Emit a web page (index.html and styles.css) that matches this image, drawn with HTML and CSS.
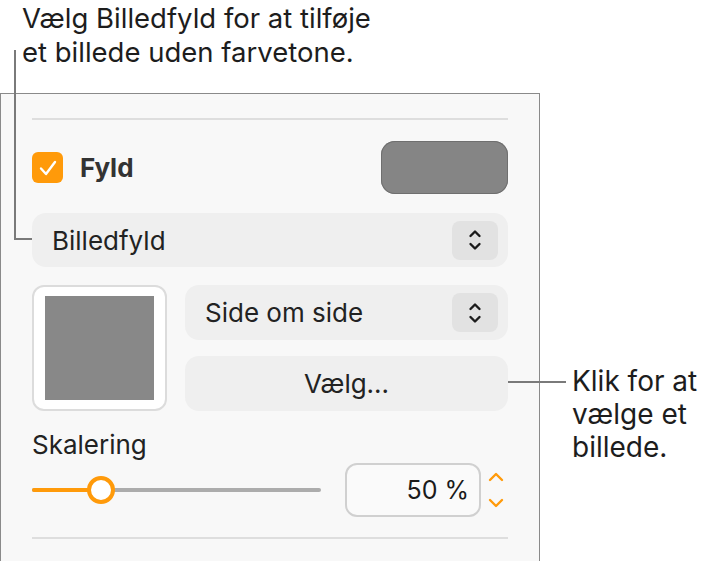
FILE: index.html
```html
<!DOCTYPE html>
<html lang="da">
<head>
    <meta charset="UTF-8">
    <title>Billedfyld</title>
    <link rel="stylesheet" href="styles.css">
</head>
<body>
<div class="page">
    <p class="caption">Vælg Billedfyld for at tilføje<br>et billede uden farvetone.</p>

    <div class="panel">
        <div class="rule"></div>

        <div class="fill-row">
            <label class="check">
                <span class="check-box">
                    <svg width="20" height="18" viewBox="0 0 20 18"><path d="M3 9.5 L8 15 L17 3" fill="none" stroke="#fff" stroke-width="2.4" stroke-linecap="round" stroke-linejoin="round"/></svg>
                </span>
                <span class="check-label">Fyld</span>
            </label>
            <div class="swatch"></div>
        </div>

        <div class="popup">
            <span>Billedfyld</span>
            <span class="stepper">
                <svg width="14" height="26" viewBox="0 0 14 26"><path d="M2.5 9 L7 4.5 L11.5 9 M2.5 17 L7 21.5 L11.5 17" fill="none" stroke="#1c1c1c" stroke-width="2.4" stroke-linecap="round" stroke-linejoin="round"/></svg>
            </span>
        </div>

        <div class="image-grid">
            <div class="well"><div class="well-img"></div></div>
            <div class="popup">
                <span>Side om side</span>
                <span class="stepper">
                    <svg width="14" height="26" viewBox="0 0 14 26"><path d="M2.5 9 L7 4.5 L11.5 9 M2.5 17 L7 21.5 L11.5 17" fill="none" stroke="#1c1c1c" stroke-width="2.4" stroke-linecap="round" stroke-linejoin="round"/></svg>
                </span>
            </div>
            <div class="button">Vælg...</div>
        </div>

        <div class="scale-label">Skalering</div>
        <div class="scale-row">
            <div class="slider">
                <div class="track"><div class="track-on" style="width: 68px"></div></div>
                <div class="thumb" style="left: 55px"></div>
            </div>
            <div class="number">50 %</div>
            <svg class="num-step" width="18" height="40" viewBox="0 0 18 40"><path d="M3 10 L9 4 L15 10 M3 30 L9 36 L15 30" fill="none" stroke="#ff9a0a" stroke-width="2.4" stroke-linecap="round" stroke-linejoin="round"/></svg>
        </div>

        <div class="rule bottom"></div>
    </div>

    <div class="lead lead-left"></div>
    <div class="lead lead-right"></div>
    <p class="callout">Klik for at<br>vælge et<br>billede.</p>
</div>
</body>
</html>
```

FILE: styles.css
```css
body {
    margin: 0;
    background: #fff;
    font-family: Inter, "Liberation Sans", sans-serif;
    color: #1d1d1d;
}

.page {
    position: relative;
    width: 708px;
    height: 561px;
    overflow: hidden;
}

.caption {
    margin: 0;
    height: 93px;
    padding: 1px 0 0 22px;
    box-sizing: border-box;
    font-size: 27.5px;
    line-height: 34px;
}

.panel {
    width: 540px;
    height: 468px;
    box-sizing: border-box;
    border: 1px solid #8a8a8a;
    border-bottom: none;
    background: #f8f8f8;
    padding: 0 31px;
}

.rule {
    height: 2px;
    background: #dedede;
    margin-top: 24px;
}

.rule.bottom {
    margin-top: 20px;
}

.fill-row {
    display: flex;
    align-items: center;
    justify-content: space-between;
    margin-top: 21px;
}

.check {
    display: flex;
    align-items: center;
    gap: 17px;
}

.check-box {
    width: 31px;
    height: 31px;
    border-radius: 6px;
    background: #ff9a0a;
    display: flex;
    align-items: center;
    justify-content: center;
}

.check-label {
    font-size: 26px;
    font-weight: 700;
    color: #333;
}

.swatch {
    width: 127px;
    height: 53px;
    border-radius: 14px;
    background: #858585;
    box-shadow: inset 0 0 0 1px #6f6f6f;
}

.popup {
    height: 54px;
    border-radius: 14px;
    background: #efefef;
    display: flex;
    align-items: center;
    justify-content: space-between;
    padding: 0 10px 0 20px;
    font-size: 26px;
    color: #222;
    margin-top: 19px;
}

.stepper {
    width: 46px;
    height: 39px;
    border-radius: 8px;
    background: #e2e2e2;
    display: flex;
    align-items: center;
    justify-content: center;
}

.image-grid {
    display: grid;
    grid-template-columns: 135px 1fr;
    grid-template-rows: 55px 55px;
    column-gap: 18px;
    row-gap: 16px;
    margin-top: 18px;
}

.image-grid .popup {
    margin-top: 0;
    height: 55px;
}

.well {
    grid-row: 1 / 3;
    border: 2px solid #dcdcdc;
    border-radius: 12px;
    background: #fff;
    display: flex;
    align-items: center;
    justify-content: center;
}

.well-img {
    width: 109px;
    height: 104px;
    background: #888;
}

.button {
    border-radius: 14px;
    background: #efefef;
    display: flex;
    align-items: center;
    justify-content: center;
    font-size: 26px;
    color: #222;
}

.scale-label {
    margin-top: 20px;
    font-size: 26px;
    line-height: 28px;
    color: #222;
}

.scale-row {
    display: flex;
    align-items: center;
    margin-top: 4px;
    height: 54px;
}

.slider {
    position: relative;
    width: 289px;
    height: 28px;
}

.track {
    position: absolute;
    left: 0;
    right: 0;
    top: 12px;
    height: 4px;
    border-radius: 2px;
    background: #acacac;
}

.track-on {
    height: 4px;
    border-radius: 2px;
    background: #ff9a0a;
}

.thumb {
    position: absolute;
    top: 0;
    width: 28px;
    height: 28px;
    box-sizing: border-box;
    border-radius: 50%;
    border: 4px solid #ff9a0a;
    background: #fff;
}

.number {
    margin-left: 24px;
    width: 136px;
    height: 54px;
    box-sizing: border-box;
    border: 2px solid #d0d0d0;
    border-radius: 12px;
    background: #fafafa;
    display: flex;
    align-items: center;
    justify-content: flex-end;
    padding-right: 10px;
    font-size: 25px;
    color: #1a1a1a;
}

.num-step {
    margin-left: 6px;
}

.lead {
    position: absolute;
    background: #7a7a7a;
}

.lead-left {
    left: 14px;
    top: 50px;
    width: 2px;
    height: 190px;
}

.lead-left::after {
    content: "";
    position: absolute;
    left: 0;
    bottom: 0;
    width: 18px;
    height: 2px;
    background: #7a7a7a;
}

.lead-right {
    left: 508px;
    top: 381px;
    width: 58px;
    height: 2px;
}

.callout {
    position: absolute;
    left: 572px;
    top: 365px;
    margin: 0;
    font-size: 28px;
    line-height: 33px;
}
```
